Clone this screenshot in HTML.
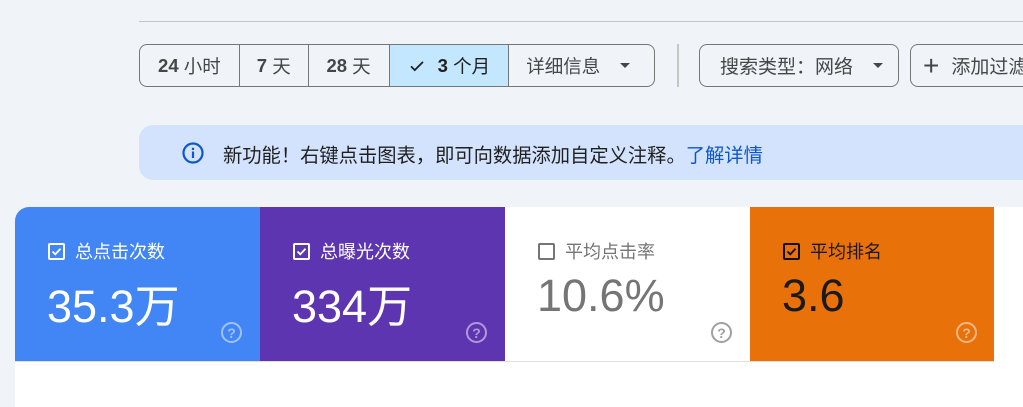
<!DOCTYPE html>
<html><head><meta charset="utf-8"><style>
*{margin:0;padding:0;box-sizing:border-box}
body{width:1023px;height:407px;overflow:hidden;background:#f0f4f9;font-family:"Liberation Sans","Noto Sans CJK SC",sans-serif;position:relative;color:#1f1f1f}
.abs{position:absolute}
.seg{left:139px;top:44px;width:516px;height:43px;border:1px solid #747775;border-radius:8px;display:flex;overflow:hidden}
.seg div{height:100%;display:flex;align-items:center;justify-content:center;font-size:18.5px;color:#444746;border-right:1px solid #747775}
.seg div:last-child{border-right:none}
.btn{top:44px;height:43px;border:1px solid #747775;border-radius:8px;display:flex;align-items:center;font-size:19px;color:#444746;white-space:nowrap;overflow:hidden}
.tri{width:0;height:0;border-left:5px solid transparent;border-right:5px solid transparent;border-top:5px solid #444746;display:inline-block}
.card{top:207px;height:154px;width:245px}
.lbl{position:absolute;left:33px;top:31px;font-size:18px;display:flex;align-items:center}
.cb{width:17px;height:17px;border:2px solid;border-radius:2px;margin-right:10px;position:relative}
.num{position:absolute;left:32px;top:63px;font-size:45px}
.q{position:absolute;left:206px;top:115px;width:21px;height:21px;border-radius:50%;border:2px solid;font-size:14px;font-weight:bold;display:flex;align-items:center;justify-content:center}
</style></head><body>
<div class="abs" style="left:139px;top:21px;right:0;height:1px;background:#c4c7c5"></div>
<div class="abs seg">
<div style="width:100px;font-weight:bold">24&nbsp;<span style="font-weight:normal">小时</span></div>
<div style="width:69px;font-weight:bold">7&nbsp;<span style="font-weight:normal">天</span></div>
<div style="width:81px;font-weight:bold">28&nbsp;<span style="font-weight:normal">天</span></div>
<div style="width:120px;background:#c2e7ff;color:#1f1f1f;font-weight:bold"><svg width="18" height="18" viewBox="0 0 24 24" style="margin-right:12px"><path d="M4 12.5l5 5L20 6.5" fill="none" stroke="#1f1f1f" stroke-width="2.4"/></svg>3&nbsp;<span style="font-weight:normal">个月</span></div>
<div style="width:145px;justify-content:flex-start;padding-left:17px">详细信息<span class="tri" style="margin-left:20px"></span></div>
</div>
<div class="abs" style="left:677px;top:44px;width:2px;height:43px;background:#c4c7c5"></div>
<div class="abs btn" style="left:699px;width:200px;padding-left:20px">搜索类型：网络<span class="tri" style="margin-left:20px"></span></div>
<div class="abs btn" style="left:910px;width:140px;padding-left:12px"><span style="font-size:28px;font-weight:300;margin-right:12px;line-height:1">+</span>添加过滤</div>
<div class="abs" style="left:139px;top:125px;width:900px;height:55px;background:#d3e3fd;border-radius:14px"></div>
<svg class="abs" style="left:181px;top:141px" width="24" height="24" viewBox="0 0 24 24"><circle cx="12" cy="12" r="9.5" fill="none" stroke="#0b57d0" stroke-width="2.2"/><rect x="10.9" y="10.5" width="2.2" height="6.5" fill="#0b57d0"/><rect x="10.9" y="6.8" width="2.2" height="2.2" fill="#0b57d0"/></svg>
<div class="abs" style="left:223px;top:140px;font-size:19.3px;color:#1f1f1f;white-space:nowrap">新功能！右键点击图表，即可向数据添加自定义注释。<span style="color:#0b57d0">了解详情</span></div>
<div class="abs" style="left:15px;top:207px;right:0;bottom:0;background:#fff;border-top-left-radius:14px"></div>
<div class="abs" style="left:15px;top:361px;width:979px;height:1px;background:#e0e0e0"></div>
<div class="abs card" style="left:15px;background:#4285f4;color:#fff;border-top-left-radius:14px">
<div class="lbl"><div class="cb" style="border-color:#fff"><svg class="abs" style="left:0;top:0" width="13" height="13" viewBox="0 0 13 13"><path d="M2.5 6.5l2.8 2.8L10.5 3.8" fill="none" stroke="#fff" stroke-width="1.8"/></svg></div>总点击次数</div>
<div class="num">35.3万</div><div class="q" style="border-color:rgba(255,255,255,.5);color:rgba(255,255,255,.5)">?</div></div>
<div class="abs card" style="left:260px;background:#5e35b1;color:#fff">
<div class="lbl"><div class="cb" style="border-color:#fff"><svg class="abs" style="left:0;top:0" width="13" height="13" viewBox="0 0 13 13"><path d="M2.5 6.5l2.8 2.8L10.5 3.8" fill="none" stroke="#fff" stroke-width="1.8"/></svg></div>总曝光次数</div>
<div class="num">334万</div><div class="q" style="border-color:rgba(255,255,255,.5);color:rgba(255,255,255,.5)">?</div></div>
<div class="abs card" style="left:505px;background:#fff;color:#757575">
<div class="lbl"><div class="cb" style="border-color:#757575"></div>平均点击率</div>
<div class="num">10.6%</div><div class="q" style="border-color:#a0a0a0;color:#a0a0a0">?</div></div>
<div class="abs card" style="left:750px;width:244px;background:#e8710a;color:#1a1a1a">
<div class="lbl"><div class="cb" style="border-color:#111"><svg class="abs" style="left:0;top:0" width="13" height="13" viewBox="0 0 13 13"><path d="M2.5 6.5l2.8 2.8L10.5 3.8" fill="none" stroke="#111" stroke-width="1.8"/></svg></div>平均排名</div>
<div class="num">3.6</div><div class="q" style="border-color:rgba(255,255,255,.5);color:rgba(255,255,255,.5)">?</div></div>
</body></html>
